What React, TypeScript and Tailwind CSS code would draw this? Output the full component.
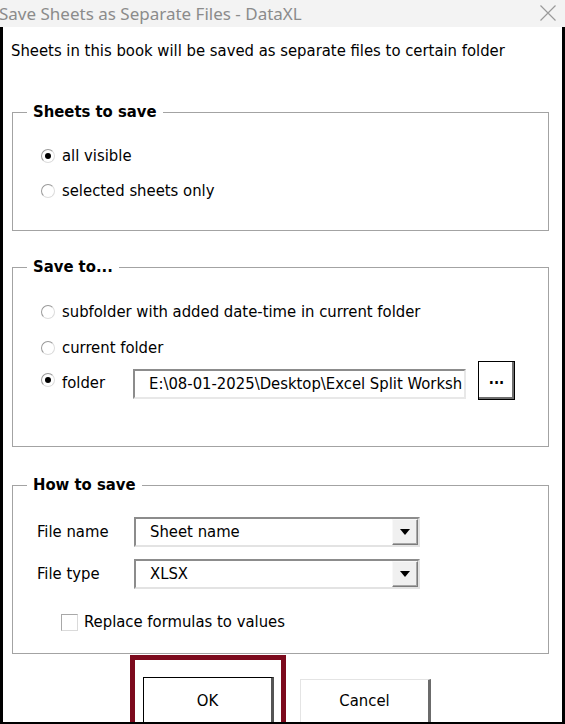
import React from "react";

const ui = "font-['DejaVu_Sans_Condensed','Liberation_Sans',sans-serif]";

function Radio({ checked }: { checked?: boolean }) {
  return (
    <span className="w-[14px] h-[14px] rounded-full border border-[#9a9a9a] border-r-[#dcdcdc] border-b-[#dcdcdc] bg-white flex items-center justify-center flex-shrink-0">
      {checked && <span className="w-[6px] h-[6px] rounded-full bg-black" />}
    </span>
  );
}

function RadioRow({ label, checked }: { label: string; checked?: boolean }) {
  return (
    <div className="flex items-center h-[20px] pl-[28px] gap-[7px]">
      <Radio checked={checked} />
      <span className="text-[16.5px] leading-[20px] text-black">{label}</span>
    </div>
  );
}

function Group({ title, className, children }: { title: string; className: string; children: React.ReactNode }) {
  return (
    <fieldset className={`border border-[#a3a3a3] w-[537px] flex-shrink-0 ${className}`}>
      <legend className="ml-[14px] px-[6px] text-[16.5px] leading-[20px] font-bold text-black">{title}</legend>
      {children}
    </fieldset>
  );
}

function Select({ value }: { value: string }) {
  return (
    <div className="w-[286px] h-[30px] flex border-2 border-[#8c8c8c] border-r-[#e3e3e3] border-b-[#e3e3e3] bg-white">
      <span className="flex-1 pl-[14px] text-[16.5px] leading-[26px] text-black">{value}</span>
      <span className="w-[26px] h-[26px] bg-[#f0f0f0] border border-[#f8f8f8] border-r-[#7c7c7c] border-b-[#7c7c7c] shadow-[inset_-1px_-1px_0_#a8a8a8] flex items-center justify-center">
        <svg width="10" height="6" viewBox="0 0 10 6">
          <path d="M0 0h10L5 6z" fill="#000" />
        </svg>
      </span>
    </div>
  );
}

export default function App() {
  return (
    <div className={`w-[565px] h-[724px] flex flex-col bg-white overflow-hidden ${ui}`}>
      {/* Title bar */}
      <div className="h-[27px] flex items-center justify-between bg-[#f3f3f3] flex-shrink-0">
        <span className="font-['Noto_Sans','Open_Sans',sans-serif] text-[17px] leading-[24px] text-[#8b8b8b] -ml-[1px]">
          Save Sheets as Separate Files - DataXL
        </span>
        <svg width="16" height="16" viewBox="0 0 16 16" className="mr-[9px] mb-[2px]">
          <path d="M0.5 0.5l15 15M15.5 0.5l-15 15" stroke="#9a9a9a" strokeWidth="1.2" fill="none" />
        </svg>
      </div>

      {/* Dialog body */}
      <div className="flex-1 min-h-0 flex flex-col border-l-[3px] border-r-[3px] border-b-[2px] border-black px-[9px] overflow-hidden">
        <p className="mt-[14px] -ml-[1px] flex-shrink-0 text-[16.5px] leading-[20px] text-black whitespace-nowrap">
          Sheets in this book will be saved as separate files to certain folder
        </p>

        <Group title="Sheets to save" className="mt-[41px] h-[129px]">
          <div className="pt-[24px] flex flex-col gap-[15px]">
            <RadioRow label="all visible" checked />
            <RadioRow label="selected sheets only" />
          </div>
        </Group>

        <Group title="Save to..." className="mt-[26px] h-[190px]">
          <div className="pt-[25px] flex flex-col">
            <RadioRow label="subfolder with added date-time in current folder" />
            <div className="mt-[16px]">
              <RadioRow label="current folder" />
            </div>
            <div className="mt-[2px] h-[40px] flex items-center pl-[28px]">
              <Radio checked />
              <span className="ml-[7px] w-[71px] text-[16.5px] leading-[20px] mt-[6px] text-black">folder</span>
              <div className="w-[333px] h-[30px] mt-[7px] border-2 border-[#8c8c8c] border-r-[#e8e8e8] border-b-[#e8e8e8] bg-white overflow-hidden whitespace-nowrap pl-[14px] text-[16.5px] leading-[26px] text-black">
                E:\08-01-2025\Desktop\Excel Split Worksh
              </div>
              <button className="ml-[12px] w-[37px] h-[39px] bg-white border border-black shadow-[inset_-2px_-2px_0_#6e6e6e] flex items-center justify-center text-[15px] font-bold leading-none pb-[2px]">
                ...
              </button>
            </div>
          </div>
        </Group>

        <Group title="How to save" className="mt-[28px] h-[179px]">
          <div className="pt-[22px] flex flex-col">
            <div className="flex items-center pl-[24px]">
              <span className="w-[97px] text-[16.5px] leading-[20px] text-black">File name</span>
              <Select value="Sheet name" />
            </div>
            <div className="mt-[12px] flex items-center pl-[24px]">
              <span className="w-[97px] text-[16.5px] leading-[20px] text-black">File type</span>
              <Select value="XLSX" />
            </div>
            <div className="mt-[23px] flex items-center pl-[48px] gap-[6px]">
              <span className="w-[17px] h-[17px] border border-[#a8a8a8] border-r-[#dadada] border-b-[#dadada] bg-white" />
              <span className="text-[16.5px] leading-[20px] text-black">Replace formulas to values</span>
            </div>
          </div>
        </Group>

        <div className="mt-[1px] flex items-start pl-[118px] gap-[14px] flex-shrink-0">
          <div className="w-[156px] h-[80px] border-[5px] border-[#7c0a1d] pt-[17px] pl-[8px] flex-shrink-0">
            <button className="w-[131px] h-[60px] bg-white border border-black border-r-[3px] border-r-[#555] text-[16.5px] leading-[20px] text-black pb-[12px]">
              OK
            </button>
          </div>
          <button className="mt-[24px] w-[131px] h-[60px] flex-shrink-0 bg-white border border-[#e4e4e4] border-r-[3px] border-r-[#6b6b6b] text-[16.5px] leading-[20px] text-black pb-[16px]">
            Cancel
          </button>
        </div>
      </div>
    </div>
  );
}
